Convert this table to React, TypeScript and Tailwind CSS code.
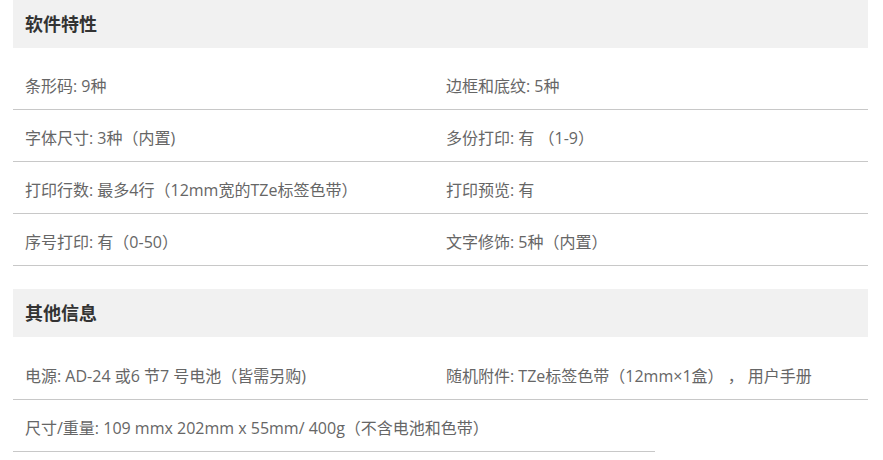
import React from "react";

const font = { fontFamily: '"Open Sans", "Noto Sans CJK SC", sans-serif' };

function Header({ title }: { title: string }) {
  return (
    <div className="h-[48px] bg-[#f1f1f1] flex items-center pl-[12px]">
      <h3 className="text-[18px] font-bold text-[#333] leading-none">{title}</h3>
    </div>
  );
}

function Cell({ text }: { text: string }) {
  return (
    <div className="h-[52px] border-b border-[#c8c8c8] flex items-center pt-[4px] pl-[12px] text-[16px] text-[#666] whitespace-pre">
      {text}
    </div>
  );
}

export default function App() {
  const rows1 = [
    "条形码: 9种",
    "边框和底纹: 5种",
    "字体尺寸: 3种（内置)",
    "多份打印: 有 （1-9）",
    "打印行数: 最多4行（12mm宽的TZe标签色带）",
    "打印预览: 有",
    "序号打印: 有（0-50）",
    "文字修饰: 5种（内置）",
  ];
  return (
    <div className="w-[883px] h-[460px] bg-white" style={font}>
      <div className="ml-[13px] w-[855px]">
        <Header title="软件特性" />
        <div className="grid grid-cols-[421px_1fr] mt-[10px]">
          {rows1.map((t) => (
            <Cell key={t} text={t} />
          ))}
        </div>
        <div className="mt-[23px]">
          <Header title="其他信息" />
        </div>
        <div className="grid grid-cols-[421px_1fr] mt-[11px]">
          <Cell text="电源: AD-24 或6 节7 号电池（皆需另购)" />
          <Cell text="随机附件: TZe标签色带（12mm×1盒） ， 用户手册" />
        </div>
        <div className="w-[642px]">
          <Cell text="尺寸/重量: 109 mmx 202mm x 55mm/ 400g（不含电池和色带）" />
        </div>
      </div>
    </div>
  );
}
